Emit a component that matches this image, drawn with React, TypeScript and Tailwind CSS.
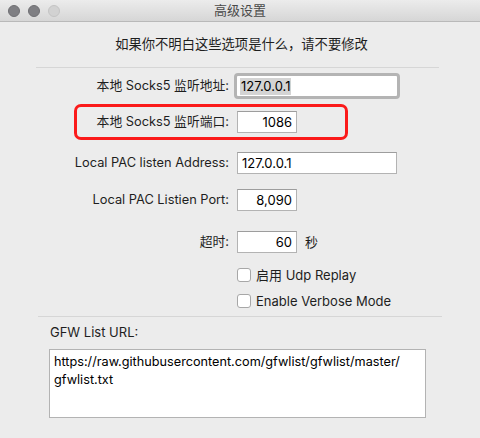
import React from "react";

const font = { fontFamily: 'Inter, "Noto Sans CJK SC", sans-serif' };

function Label({ children }: { children: React.ReactNode }) {
  return <div className="w-[230px] shrink-0 text-right pr-[1px] text-[12.8px] text-[#1e1e1e] leading-none">{children}</div>;
}

function Field({ value, w, right }: { value: string; w: string; right?: boolean }) {
  return (
    <div className={`${w} h-[22px] bg-white border border-[#b3b3b3] border-t-[#9d9d9d] flex items-center px-[4px] text-[13px] text-black leading-none ${right ? "justify-end" : ""}`}>
      {value}
    </div>
  );
}

function Checkbox({ label }: { label: string }) {
  return (
    <div className="flex items-center h-[14px] pl-[237px]">
      <div className="w-[14px] h-[14px] bg-white border border-[#a7a7a7] rounded-[3px] shrink-0" />
      <span className="ml-[5px] text-[13px] text-[#1e1e1e] leading-none">{label}</span>
    </div>
  );
}

export default function App() {
  return (
    <div className="w-[480px] h-[438px] bg-[#ececec] flex flex-col overflow-hidden" style={font}>
      {/* title bar */}
      <div className="h-[22px] shrink-0 bg-gradient-to-b from-[#ececec] to-[#d6d6d6] border-b border-[#b9b9b9] flex items-center relative">
        <div className="flex gap-[8px] pl-[8px]">
          <div className="w-[12px] h-[12px] rounded-full bg-[#7f7f83] border border-[#6f6f73]" />
          <div className="w-[12px] h-[12px] rounded-full bg-[#7f7f83] border border-[#6f6f73]" />
          <div className="w-[12px] h-[12px] rounded-full bg-[#d2d2d2] border border-[#c4c4c4]" />
        </div>
        <div className="absolute inset-0 flex items-center justify-center text-[13px] text-[#4a4a4a] leading-none">高级设置</div>
      </div>

      {/* subtitle */}
      <div className="mt-[14px] h-[18px] flex items-center justify-center text-[13.3px] text-[#1e1e1e] pl-[3px]">如果你不明白这些选项是什么，请不要修改</div>

      <div className="mt-[13px] h-px bg-[#d6d6d6] ml-[36px] w-[403px]" />

      {/* row 1 focused */}
      <div className="mt-[5px] h-[26px] flex items-center">
        <Label>本地 Socks5 监听地址:</Label>
        <div className="ml-[4px] w-[166px] h-[26px] rounded-[4px] border-[3px] border-[#b4b4b4] bg-white flex items-center px-[3px]">
          <span className="bg-[#d4d4d4] text-[13px] text-black leading-[17px] px-[1px]">127.0.0.1</span>
        </div>
      </div>

      {/* row 2 with red highlight */}
      <div className="mt-[5px] h-[36px] flex items-center relative">
        <Label>本地 Socks5 监听端口:</Label>
        <div className="ml-[7px]">
          <Field value="1086" w="w-[60px]" right />
        </div>
        <div className="absolute left-[74px] top-0 w-[274px] h-[36px] border-[3px] border-[#fb1a1a] rounded-[7px]" />
      </div>

      {/* row 3 */}
      <div className="mt-[12px] h-[22px] flex items-center">
        <Label>Local PAC listen Address:</Label>
        <div className="ml-[7px]">
          <Field value="127.0.0.1" w="w-[160px]" />
        </div>
      </div>

      {/* row 4 */}
      <div className="mt-[15px] h-[22px] flex items-center">
        <Label>Local PAC Listien Port:</Label>
        <div className="ml-[7px]">
          <Field value="8,090" w="w-[60px]" right />
        </div>
      </div>

      {/* row 5 */}
      <div className="mt-[20px] h-[22px] flex items-center">
        <Label>超时:</Label>
        <div className="ml-[7px]">
          <Field value="60" w="w-[60px]" right />
        </div>
        <span className="ml-[8px] text-[13px] text-[#1e1e1e] leading-none">秒</span>
      </div>

      <div className="mt-[15px]">
        <Checkbox label="启用 Udp Replay" />
      </div>
      <div className="mt-[12px]">
        <Checkbox label="Enable Verbose Mode" />
      </div>

      <div className="mt-[8px] h-px bg-[#d6d6d6] ml-[38px] w-[404px]" />

      <div className="mt-[8px] h-[16px] flex items-center pl-[50px] text-[13px] text-[#1e1e1e]">GFW List URL:</div>

      <div className="mt-[8px] ml-[49px] w-[377px] h-[69px] bg-white border border-[#b3b3b3] px-[4px] pt-[3px] text-[12.7px] text-black leading-[18px]">
        https://raw.githubusercontent.com/gfwlist/gfwlist/master/
        <br />
        gfwlist.txt
      </div>
    </div>
  );
}
